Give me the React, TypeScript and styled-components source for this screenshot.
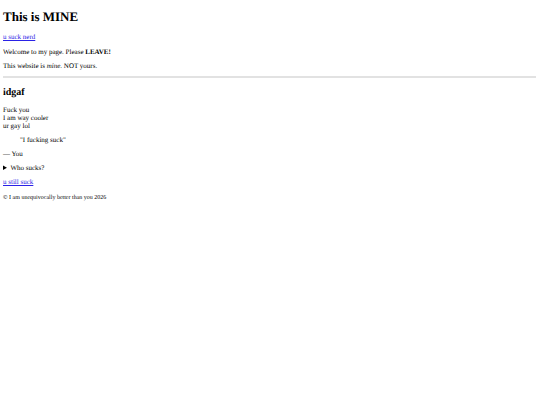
import React from "react";
import styled, { createGlobalStyle } from "styled-components";

const GlobalStyle = createGlobalStyle`
  body {
    margin: 0;
    background: #fff;
    color: #000;
    font-family: "Liberation Serif", "Times New Roman", serif;
    font-size: 7px;
    line-height: 8px;
    text-rendering: geometricPrecision;
  }
`;

const Page = styled.div`
  padding: 9px 4px 9px 3px;
`;

const Title = styled.h1`
  margin: 0 0 8px;
  font-size: 13px;
  line-height: 16px;
`;

const Subtitle = styled.h2`
  margin: 9px 0 8px;
  font-size: 10px;
  line-height: 11px;
`;

const Text = styled.p`
  margin: 0 0 6px;
`;

const LinkLine = styled(Text)`
  margin-bottom: 7px;
`;

const Link = styled.a`
  color: #2a22e6;
  text-decoration: underline;
`;

const Rule = styled.hr`
  height: 2px;
  margin: 0;
  border: 0;
  background: #e2e2e2;
`;

const Quote = styled.blockquote`
  margin: 0 17px 6px;
`;

const Disclosure = styled.details`
  margin: 0 0 6px;
`;

const Small = styled.small`
  font-size: 6px;
`;

export default function App() {
  return (
    <>
      <GlobalStyle />
      <Page>
        <header>
          <Title>This is MINE</Title>
          <LinkLine><Link href="#nerd">u suck nerd</Link></LinkLine>
        </header>
        <main>
          <Text>Welcome to my page. Please <strong>LEAVE!</strong></Text>
          <Text>This website is <em>mine</em>. NOT yours.</Text>
          <Rule />
          <Subtitle>idgaf</Subtitle>
          <Text>
            Fuck you<br />
            I am way cooler<br />
            ur gay lol
          </Text>
          <Quote>"I fucking suck"</Quote>
          <Text>— You</Text>
          <Disclosure>
            <summary>Who sucks?</summary>
          </Disclosure>
          <LinkLine><Link href="#still">u still suck</Link></LinkLine>
        </main>
        <footer>
          <Small>© I am unequivocally better than you 2026</Small>
        </footer>
      </Page>
    </>
  );
}
